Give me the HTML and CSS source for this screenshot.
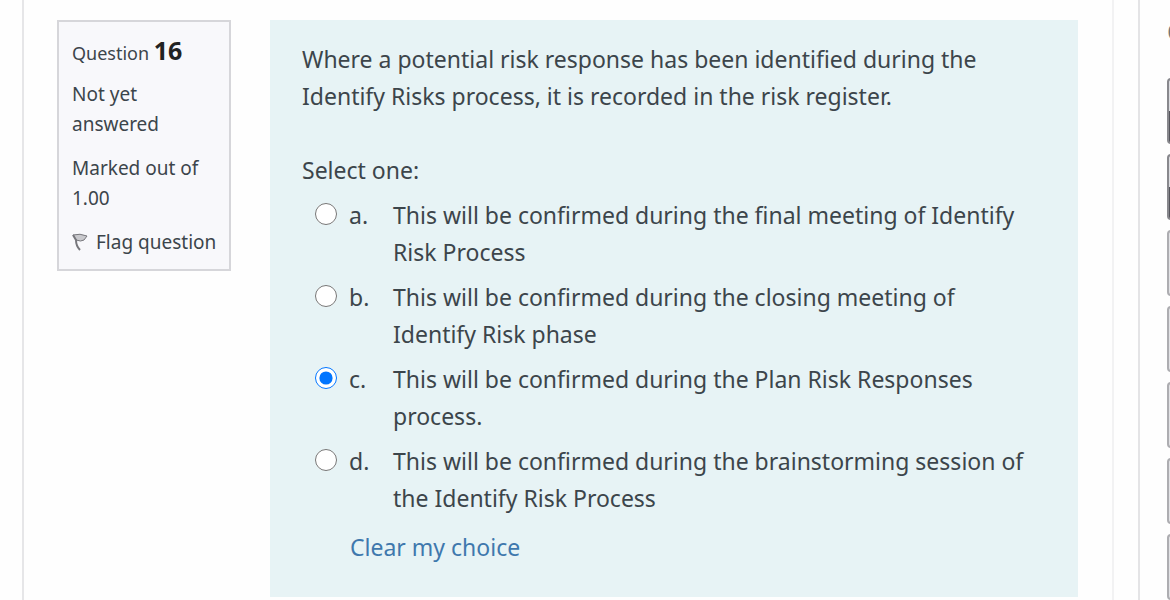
FILE: index.html
```
<!DOCTYPE html>
<html lang="en">
<head>
    <meta charset="UTF-8">
    <meta name="viewport" content="width=device-width, initial-scale=1.0">
    <title>Question 16</title>
    <link rel="stylesheet" href="styles.css">
</head>
<body>
    <div class="page">
        <main class="region-main">
            <section class="info">
                <h3 class="no">Question <span class="qno">16</span></h3>
                <div class="state">Not yet answered</div>
                <div class="grade">Marked out of 1.00</div>
                <a class="flag" href="#">
                    <svg class="flag-icon" viewBox="0 0 16 18" aria-hidden="true">
                        <path d="M1 2 Q8 0 15 3 L12 7 Q9 9 4 7 Z" fill="#c9c9cd" stroke="#77777c" stroke-width="1"/>
                        <path d="M1 2 L4 7 Q4 13 8 17" fill="none" stroke="#77777c" stroke-width="2"/>
                    </svg>
                    <span>Flag question</span>
                </a>
            </section>
            <form class="formulation">
                <p class="qtext">Where a potential risk response has been identified during the Identify Risks process, it is recorded in the risk register.</p>
                <fieldset class="ablock">
                    <legend class="prompt">Select one:</legend>
                    <div class="answer">
                        <input type="radio" name="answer" id="answer0">
                        <label for="answer0"><span class="number">a.</span><span class="text">This will be confirmed during the final meeting of Identify Risk Process</span></label>
                    </div>
                    <div class="answer">
                        <input type="radio" name="answer" id="answer1">
                        <label for="answer1"><span class="number">b.</span><span class="text">This will be confirmed during the closing meeting of Identify Risk phase</span></label>
                    </div>
                    <div class="answer">
                        <input type="radio" name="answer" id="answer2" checked>
                        <label for="answer2"><span class="number">c.</span><span class="text">This will be confirmed during the Plan Risk Responses process.</span></label>
                    </div>
                    <div class="answer">
                        <input type="radio" name="answer" id="answer3">
                        <label for="answer3"><span class="number">d.</span><span class="text">This will be confirmed during the brainstorming session of the Identify Risk Process</span></label>
                    </div>
                </fieldset>
                <a class="clear" href="#">Clear my choice</a>
            </form>
        </main>
        <aside class="quiznav">
            <h2 class="nav-title">Q</h2>
            <div class="nav-buttons">
                <a class="qnbutton answered" href="#" aria-label="Question 1"></a>
                <a class="qnbutton answered" href="#" aria-label="Question 5"></a>
                <a class="qnbutton" href="#" aria-label="Question 9"></a>
                <a class="qnbutton" href="#" aria-label="Question 13"></a>
                <a class="qnbutton" href="#" aria-label="Question 17"></a>
                <a class="qnbutton" href="#" aria-label="Question 21"></a>
                <a class="qnbutton" href="#" aria-label="Question 25"></a>
            </div>
        </aside>
    </div>
</body>
</html>
```

FILE: styles.css
```
* {
    box-sizing: border-box;
}
body {
    margin: 0;
    background-color: #fefefe;
    color: #3c454b;
    font-family: "Segoe UI", "Noto Sans", "Open Sans", sans-serif;
    font-size: 23px;
    line-height: 37px;
}
.page {
    display: flex;
    gap: 24px;
    height: 100vh;
    padding-left: 22px;
    overflow: hidden;
}
.region-main {
    flex: 1;
    display: flex;
    align-items: flex-start;
    gap: 39px;
    padding: 20px 34px 0 33px;
    border-left: 2px solid #e6e6e8;
    border-right: 2px solid #f2f2f3;
}
.info {
    flex: 0 0 174px;
    padding: 13px 12px 12px 13px;
    background-color: #f8f8fb;
    border: 2px solid #d6d6da;
    font-size: 19px;
    line-height: 30px;
}
.no {
    margin: 0 0 11px;
    font-size: 18px;
    font-weight: normal;
    line-height: 30px;
}
.qno {
    color: #222;
    font-size: 25px;
    font-weight: bold;
}
.state {
    margin-bottom: 14px;
}
.grade {
    margin-bottom: 14px;
}
.flag {
    display: flex;
    align-items: center;
    gap: 8px;
    color: inherit;
    text-decoration: none;
    white-space: nowrap;
}
.flag-icon {
    width: 16px;
    height: 18px;
}
.formulation {
    flex: 1;
    min-height: 577px;
    padding: 21px 44px 21px 32px;
    background-color: #e7f3f5;
}
.qtext {
    margin: 0 0 37px;
}
.ablock {
    margin: 0;
    padding: 0;
    border: 0;
}
.prompt {
    padding: 0;
    margin-bottom: 8px;
}
.answer {
    display: flex;
    align-items: flex-start;
    margin-bottom: 8px;
}
.answer input {
    flex: none;
    width: 22px;
    height: 22px;
    margin: 6px 12px 0 13px;
}
.answer label {
    display: flex;
}
.number {
    flex: none;
    width: 44px;
}
.clear {
    display: block;
    margin: 4px 0 0 48px;
    color: #3f78ad;
    text-decoration: none;
}
.quiznav {
    width: 32px;
    flex: none;
    padding: 13px 0 0 27px;
    border-left: 2px solid #e4e4e6;
    overflow: hidden;
}
.nav-title {
    margin: 0 0 28px;
    color: #77777c;
    font-size: 25px;
    font-weight: normal;
    line-height: 37px;
}
.nav-buttons {
    display: flex;
    flex-direction: column;
    gap: 10px;
}
.qnbutton {
    flex: none;
    width: 50px;
    height: 66px;
    border: 2px solid #adadb1;
    border-radius: 4px;
    background-color: #e2e2e5;
}
.answered {
    border-color: #88888d;
    background-image: linear-gradient(#dcdce0 50%, #55555c 50%);
}
```
